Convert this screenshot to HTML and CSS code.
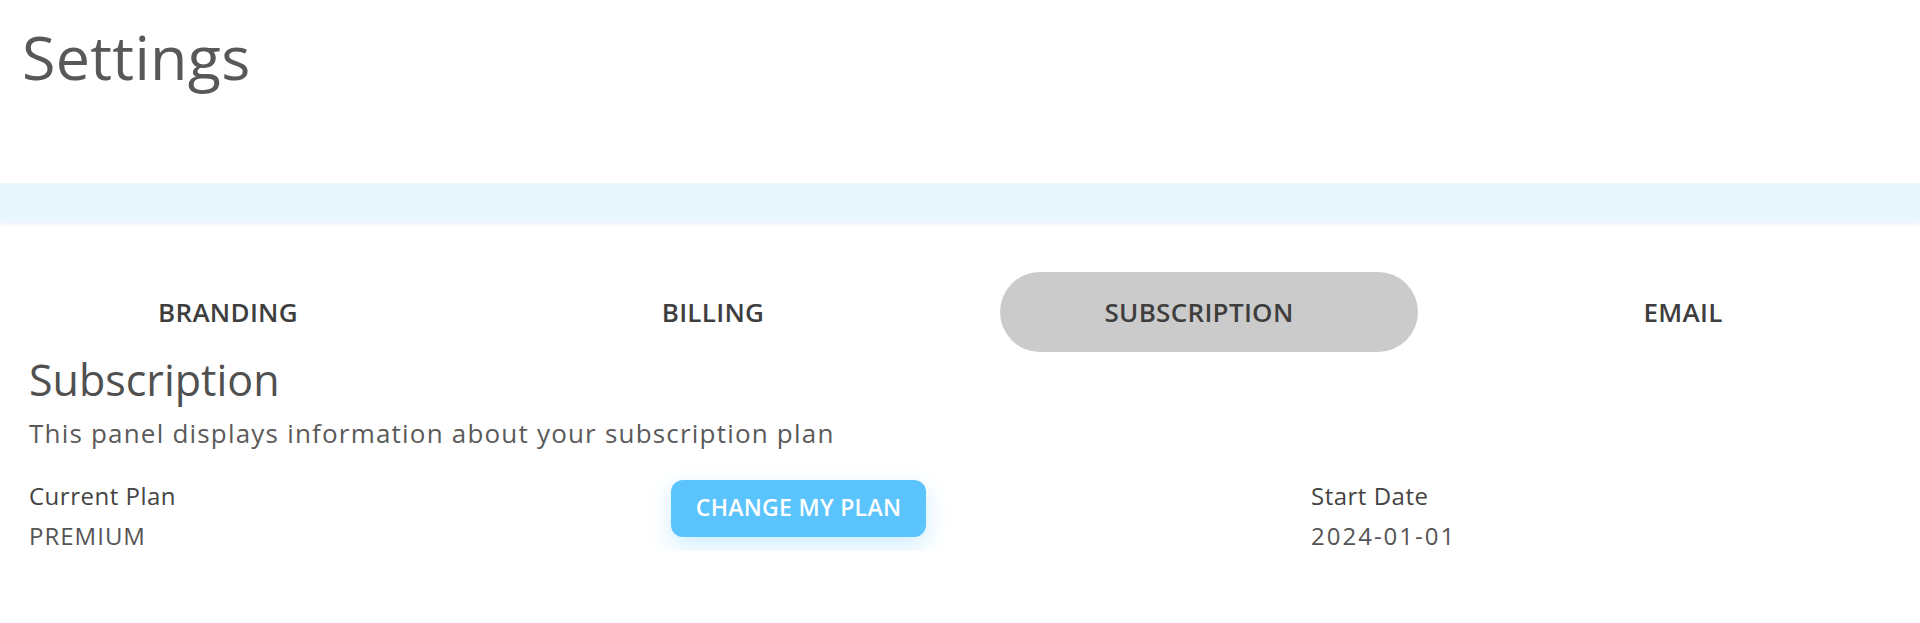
FILE: index.html
```html
<!DOCTYPE html>
<html lang="en">
<head>
  <meta charset="UTF-8" />
  <meta name="viewport" content="width=device-width, initial-scale=1.0"/>
  <title>Settings</title>
  <link rel="stylesheet" href="styles.css">
</head>
<body>
  <header class="page-head">
    <h1>Settings</h1>
  </header>

  <div class="band"></div>

  <section class="card">
    <nav class="tabs">
      <button class="tab">BRANDING</button>
      <button class="tab">BILLING</button>
      <button class="tab active">SUBSCRIPTION</button>
      <button class="tab">EMAIL</button>
    </nav>

    <div class="panel">
      <h2>Subscription</h2>
      <p class="lead">This panel displays information about your subscription plan</p>

      <div class="plan-grid">
        <div class="field">
          <div class="label">Current Plan</div>
          <div class="value">PREMIUM</div>
        </div>
        <div class="action">
          <button class="btn-plan">CHANGE MY PLAN</button>
        </div>
        <div class="field">
          <div class="label">Start Date</div>
          <div class="value date">2024-01-01</div>
        </div>
      </div>
    </div>
  </section>
</body>
</html>
```

FILE: styles.css
```css
* { box-sizing: border-box; margin: 0; padding: 0; }
body {
  font-family: 'Open Sans', 'Noto Sans', sans-serif;
  background: #fff;
  color: #444;
  overflow: hidden;
}
.page-head {
  padding: 21px 0 0 22px;
}
.page-head h1 {
  font-size: 61px;
  line-height: 72px;
  font-weight: 400;
  letter-spacing: 0.3px;
  color: #585858;
}
.band {
  margin-top: 90px;
  height: 40px;
  background: #e9f6fd;
  box-shadow: 0 2px 3px rgba(0, 0, 0, 0.04);
}
.card {
  background: #fff;
}
.tabs {
  margin-top: 49px;
  display: grid;
  grid-template-columns: repeat(4, 456px);
  column-gap: 29px;
}
.tab {
  height: 80px;
  border: none;
  background: none;
  font-family: inherit;
  font-size: 26px;
  line-height: 78px;
  font-weight: 600;
  letter-spacing: 0.3px;
  color: #3e3e3e;
  text-align: center;
  border-radius: 40px;
  cursor: pointer;
}
.tab.active {
  background: #cbcbcb;
  margin: 0 8px 0 30px;
  padding-right: 20px;
}
.panel {
  padding: 0 29px;
}
.panel h2 {
  margin-top: 4px;
  font-size: 43px;
  line-height: 48px;
  font-weight: 400;
  color: #505050;
}
.lead {
  margin-top: 13px;
  font-size: 26px;
  line-height: 32px;
  letter-spacing: 1.2px;
  color: #5a5a5a;
}
.plan-grid {
  margin-top: 31px;
  display: grid;
  grid-template-columns: 642px 640px 1fr;
}
.field {
  padding-top: 1px;
}
.label {
  font-size: 24px;
  line-height: 30px;
  font-weight: 500;
  letter-spacing: 0.5px;
  color: #444;
  margin-bottom: 10px;
}
.value {
  font-size: 24px;
  line-height: 30px;
  letter-spacing: 1px;
  color: #555;
}
.value.date {
  letter-spacing: 2px;
}
.btn-plan {
  width: 255px;
  height: 57px;
  padding-bottom: 4px;
  border: none;
  border-radius: 12px;
  background: #5bc4fc;
  color: #fff;
  font-family: inherit;
  font-size: 23px;
  font-weight: 600;
  letter-spacing: 0.3px;
  box-shadow: 0 8px 22px rgba(91, 196, 252, 0.3);
  cursor: pointer;
}
```
